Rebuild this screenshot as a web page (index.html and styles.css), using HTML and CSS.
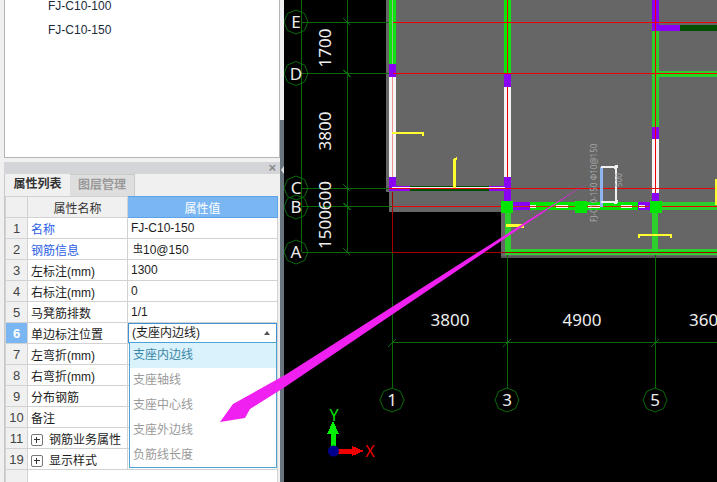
FILE: index.html
```html
<!DOCTYPE html>
<html lang="zh-CN">
<head>
<meta charset="utf-8">
<title>属性列表</title>
<link rel="stylesheet" href="styles.css">
</head>
<body>
<div class="app">
  <aside class="side">
    <div class="tree">
      <div class="tree-item first">FJ-C10-100</div>
      <div class="tree-item">FJ-C10-150</div>
    </div>
    <section class="panel">
      <div class="panel-title"><span class="close">×</span></div>
      <div class="tabs">
        <div class="tab active">属性列表</div>
        <div class="tab">图层管理</div>
      </div>
      <table class="props">
        <colgroup><col class="c-idx"><col class="c-name"><col class="c-val"></colgroup>
        <tr class="head"><th class="idx"></th><th>属性名称</th><th class="val-head">属性值</th></tr>
        <tr><td class="idx">1</td><td class="link">名称</td><td>FJ-C10-150</td></tr>
        <tr><td class="idx">2</td><td class="link">钢筋信息</td><td><span class="rebar">虫</span>10@150</td></tr>
        <tr><td class="idx">3</td><td>左标注(mm)</td><td>1300</td></tr>
        <tr><td class="idx">4</td><td>右标注(mm)</td><td>0</td></tr>
        <tr><td class="idx">5</td><td>马凳筋排数</td><td>1/1</td></tr>
        <tr>
          <td class="idx sel">6</td><td>单边标注位置</td>
          <td class="combo-cell">
            <div class="combo">(支座内边线)<span class="caret"></span></div>
            <ul class="menu">
              <li class="current">支座内边线</li>
              <li>支座轴线</li>
              <li>支座中心线</li>
              <li>支座外边线</li>
              <li>负筋线长度</li>
            </ul>
          </td>
        </tr>
        <tr><td class="idx">7</td><td>左弯折(mm)</td><td></td></tr>
        <tr><td class="idx">8</td><td>右弯折(mm)</td><td></td></tr>
        <tr><td class="idx">9</td><td>分布钢筋</td><td></td></tr>
        <tr><td class="idx">10</td><td>备注</td><td></td></tr>
        <tr><td class="idx">11</td><td><span class="plus"></span>钢筋业务属性</td><td></td></tr>
        <tr><td class="idx">19</td><td><span class="plus"></span>显示样式</td><td></td></tr>
        <tr class="filler"><td class="idx"></td><td colspan="2"></td></tr>
      </table>
    </section>
  </aside>
  <div class="splitter"><div class="grip"><span class="grip-arrow"></span></div></div>
  <main class="canvas">
    <svg class="cad" viewBox="284 0 433 482" width="433" height="482" aria-label="CAD">
      <polygon class="slab" points="386,0 717,0 717,258 501,258 501,212 389,212 389,192 386,192"/>
      <rect class="slab-edge" x="501" y="256" width="216" height="2"/>

      <!-- grid lines -->
      <g class="grid">
        <path d="M301.5 0V252M347 0V252M392 252V388M507 212V388M655 212V388"/>
        <path d="M301.5 22H389M301.5 73.5H389M301.5 188H389M301.5 206.5H392M301.5 252H392M392 342.5H717"/>
        <path d="M343.500 18.500l7 7M343.500 70l7 7M343.500 184.500l7 7M343.500 203l7 7M343.500 248.500l7 7"/>
        <path d="M388 347l8-8M503 347l8-8M651 347l8-8"/>
      </g>

      <!-- left wall -->
      <rect class="g-bright" x="389" y="0" width="7" height="64"/>
      <rect class="slab-line" x="392.300" y="0" width="1" height="64"/>
      <rect class="purple" x="389" y="64" width="7" height="13"/>
      <rect class="white" x="389" y="77" width="7" height="100"/>
      <rect class="pink" x="391.500" y="77" width="1.500" height="100"/>
      <rect class="purple" x="389" y="177" width="7" height="11"/>

      <!-- middle wall -->
      <rect class="g-bright" x="504" y="0" width="6.500" height="73"/>
      <rect class="purple" x="504" y="73" width="6.500" height="14"/>
      <rect class="white" x="504" y="87" width="6.500" height="90"/>
      <rect class="purple" x="504" y="177" width="6.500" height="24"/>

      <!-- right wall -->
      <rect class="purple" x="652" y="0" width="7" height="31"/>
      <rect class="purple" x="659" y="25" width="21" height="6"/>
      <rect class="g-deep" x="680" y="25" width="37" height="6"/>
      <rect class="g-soft" x="652" y="31" width="7" height="96"/>
      <rect class="g-soft" x="659" y="71" width="58" height="6"/>
      <rect class="g-bright" x="659" y="73" width="58" height="1.500"/>
      <rect class="purple" x="652" y="127" width="7" height="12"/>
      <rect class="white" x="652" y="139" width="7" height="54"/>
      <rect class="purple" x="652" y="193" width="7" height="8"/>

      <!-- upper beam C -->
      <rect class="purple" x="389" y="186" width="21" height="5"/>
      <rect class="g-deep" x="410" y="186" width="79" height="5"/>
      <rect class="purple" x="489" y="186" width="16" height="5"/>
      <rect class="white" x="392" y="187" width="113" height="1.500"/>

      <!-- lower walls -->
      <rect class="g-soft" x="505" y="212" width="6" height="43"/>
      <rect class="g-soft" x="652" y="212" width="6" height="38"/>
      <rect class="g-soft" x="507" y="249" width="210" height="6"/>
      <rect class="g-bright" x="507" y="251" width="210" height="2"/>
      <rect class="g-soft" x="661" y="202" width="56" height="8"/>

      <!-- red axis lines -->
      <g class="red">
        <path d="M393 22H717M393 73.500H717M389 188H717M392 206.500H717"/>
        <path d="M507.500 0V73M507.500 87V177M655.500 0V193"/>
      </g>
      <path class="red-dim" d="M392 192V252H717"/>

      <!-- selected beam -->
      <rect class="purple" x="513" y="202" width="17" height="8"/>
      <rect class="g-main" x="530" y="202" width="108" height="8"/>
      <rect class="purple" x="638" y="202" width="12" height="8"/>
      <g class="white">
        <rect x="530" y="205" width="6" height="3"/>
        <rect x="556" y="205" width="12" height="3"/>
        <rect x="588" y="205" width="12" height="3"/>
        <rect x="621" y="205" width="11" height="3"/>
        <rect x="639" y="205" width="6" height="3"/>
      </g>
      <rect class="red-mid" x="513" y="206" width="136" height="1"/>
      <rect class="g-main" x="501" y="201" width="12" height="12"/>
      <rect class="g-main" x="575" y="201" width="12" height="12"/>
      <rect class="g-main" x="650" y="201" width="12" height="12"/>

      <!-- yellow rebars -->
      <g class="yellow">
        <path d="M392 133H423V135.500"/>
        <path d="M454.500 188V160L457 158"/>
        <path d="M506 225.700H522.500V228"/>
        <path d="M639 237.500V235H671V237.500"/>
        <path d="M716.500 179V205"/>
      </g>

      <!-- selected rebar shape -->
      <path class="bar-blue" d="M601 167V207"/>
      <path class="bar-white" d="M601 167H616V202H601"/>
      <circle class="dot" cx="616" cy="167" r="2"/>
      <circle class="dot" cx="616" cy="202" r="2"/>
      <text class="tiny" transform="translate(597 222) rotate(-90)">FJ-C10-150 Φ10@150</text>
      <text class="tiny" transform="translate(622 187) rotate(-90)">500</text>

      <!-- bubbles -->
      <g class="bubble">
        <polygon points="296,10 304.500,13.500 308,22 304.500,30.500 296,34 287.500,30.500 284,22 287.500,13.500"/>
        <polygon points="296,61.500 304.500,65 308,73.500 304.500,82 296,85.500 287.500,82 284,73.500 287.500,65"/>
        <polygon points="296,176 304.500,179.500 308,188 304.500,196.500 296,200 287.500,196.500 284,188 287.500,179.500"/>
        <polygon points="296,195 304.500,198.500 308,207 304.500,215.500 296,219 287.500,215.500 284,207 287.500,198.500"/>
        <polygon points="296,240 304.500,243.500 308,252 304.500,260.500 296,264 287.500,260.500 284,252 287.500,243.500"/>
        <polygon points="392,388 400.500,391.500 404,400 400.500,408.500 392,412 383.500,408.500 380,400 383.500,391.500"/>
        <polygon points="507,388 515.500,391.500 519,400 515.500,408.500 507,412 498.500,408.500 495,400 498.500,391.500"/>
        <polygon points="655,388 663.500,391.500 667,400 663.500,408.500 655,412 646.500,408.500 643,400 646.500,391.500"/>
      </g>
      <g class="label">
        <text x="296" y="28">E</text>
        <text x="296" y="79.500">D</text>
        <text x="296" y="194">C</text>
        <text x="296" y="213">B</text>
        <text x="296" y="258">A</text>
        <text x="392" y="406">1</text>
        <text x="507" y="406">3</text>
        <text x="655" y="406">5</text>
        <text x="450" y="326">3800</text>
        <text x="582" y="326">4900</text>
        <text x="689" y="326" class="start">360</text>
        <text transform="translate(331 48) rotate(-90)">1700</text>
        <text transform="translate(331 131) rotate(-90)">3800</text>
        <text transform="translate(331 215) rotate(-90)">1500600</text>
      </g>

      <!-- axis gizmo -->
      <path class="axis-y" d="M333 451V431"/>
      <polygon class="axis-y-head" points="333,421 339,434 327,434"/>
      <path class="axis-x" d="M333 451H354"/>
      <polygon class="axis-x-head" points="364,451 352,446 352,456"/>
      <circle class="axis-o" cx="333.500" cy="451" r="5.500"/>
      <text class="axis-y-label" x="334" y="421">Y</text>
      <text class="axis-x-label" x="370" y="457">X</text>
    </svg>
  </main>
  <svg class="annot" viewBox="0 0 717 482" width="717" height="482" aria-hidden="true">
    <polygon points="587,183 285,375 233,404 220,422 245,418 250,409 285,387"/>
  </svg>
</div>
</body>
</html>
```

FILE: styles.css
```css
* { box-sizing: border-box; }
html, body { margin: 0; padding: 0; }
body {
  width: 717px;
  height: 482px;
  overflow: hidden;
  background: #f0f0f0;
  font-family: "Liberation Sans", "Noto Sans CJK SC", sans-serif;
  font-size: 12px;
  color: #1c1c1c;
}
.app { position: relative; display: flex; width: 717px; height: 482px; overflow: hidden; }

/* left column */
.side { width: 280px; flex: none; padding-left: 4px; display: flex; flex-direction: column; gap: 4px; }
.tree {
  height: 158px;
  flex: none;
  background: #fff;
  border: 1px solid #b4b4b4;
  border-top: 0;
  padding-left: 43px;
}
.tree-item { height: 24px; line-height: 24px; color: #1a2a3a; }
.tree-item.first { height: 18px; line-height: 12px; }

.panel { flex: 1; min-height: 0; border-left: 1px solid #c8c8c8; background: #f0f0f0; }
.panel-title { height: 12px; background: #d4d5d9; margin-left: -1px; text-align: right; padding-right: 4px; }
.close { font-size: 13px; line-height: 12px; font-weight: bold; color: #8a8a8a; display: block; }
.tabs { display: flex; height: 22px; }
.tab {
  width: 65px;
  line-height: 21px;
  text-align: center;
  color: #999;
  font-weight: bold;
  background: #dedede;
  border-right: 1px solid #c8c8c8;
  border-top: 1px solid #c8c8c8;
}
.tab.active { color: #333; background: #f0f0f0; border-top: 0; border-right: 0; }

.props { width: 272px; table-layout: fixed; border-collapse: collapse; }
.c-idx { width: 22px; }
.c-name { width: 100px; }
.c-val { width: 150px; }
.props th, .props td {
  height: 21px;
  padding: 0 3px;
  border: 1px solid #d2d2d2;
  background: #fff;
  font-weight: normal;
  text-align: left;
  white-space: nowrap;
}
.props th { text-align: center; background: #f0f0f0; color: #333; }
.props th.val-head { background: #7ab6f2; color: #fff; border-color: #5ea3e8; }
.props td.idx, .props th.idx { background: #f0f0f0; text-align: center; color: #444; font-size: 13px; padding: 0; }
.props td.idx.sel { background: #7ab6f2; color: #fff; font-weight: bold; }
.props td.link { color: #2b5ee6; }
.rebar { font-size: 10px; position: relative; top: -2px; margin-left: 2px; }
.plus {
  display: inline-block;
  position: relative;
  width: 12px;
  height: 12px;
  margin-right: 6px;
  border: 1px solid #777;
  border-radius: 2px;
  vertical-align: -2px;
}
.plus::before, .plus::after { content: ""; position: absolute; background: #333; }
.plus::before { left: 2px; right: 2px; top: 4px; height: 1px; }
.plus::after { top: 2px; bottom: 2px; left: 4px; width: 1px; }
.filler td { height: 13px; border-bottom: 0; }
.filler td:not(.idx) { border-right: 1px solid #d2d2d2; }

.combo-cell { position: relative; }
.props td.combo-cell { padding: 0; }
.combo {
  height: 20px;
  line-height: 18px;
  padding-left: 3px;
  border: 1px solid #3f8fd6;
  position: relative;
  margin-top: -1px;
}
.caret {
  position: absolute;
  right: 6px;
  top: 7px;
  border-left: 3px solid transparent;
  border-right: 3px solid transparent;
  border-bottom: 4px solid #555;
}
.menu {
  position: absolute;
  left: 1px;
  top: 19px;
  width: 148px;
  height: 126px;
  margin: 0;
  padding: 0;
  list-style: none;
  background: #fff;
  border: 1px solid #4ea3d6;
  z-index: 2;
}
.menu li { height: 25px; line-height: 24px; padding-left: 3px; color: #9a9a9a; }
.menu li.current { background: #d9f2fb; color: #3b86a8; }

/* splitter */
.splitter { width: 4px; flex: none; display: flex; flex-direction: column; justify-content: flex-end; }
.grip { height: 362px; background: #68747e; position: relative; }
.grip-arrow {
  position: absolute;
  left: 1px;
  top: 46px;
  border-top: 4px solid transparent;
  border-bottom: 4px solid transparent;
  border-right: 3px solid #dfe2e5;
}

/* CAD canvas */
.canvas { flex: 1; min-width: 0; background: #000; }
.cad { display: block; shape-rendering: crispEdges; font-family: "Noto Sans", sans-serif; }
.slab { fill: #666; }
.slab-edge { fill: #555; }
.grid { fill: none; stroke: #0a6a0a; stroke-width: 1; }
.g-bright { fill: #0ee30e; }
.g-main { fill: #00e600; }
.g-soft { fill: #2ccf2c; }
.g-deep { fill: #004f00; }
.purple { fill: #8a00f5; }
.white { fill: #f4f4f4; }
.pink { fill: #f09090; }
.slab-line { fill: #8fbf8f; }
.red { fill: none; stroke: #f00000; stroke-width: 1; }
.red-dim { fill: none; stroke: #a40000; stroke-width: 1; }
.red-mid { fill: #c83000; }
.yellow { fill: none; stroke: #ffff30; stroke-width: 2.5; }
.bar-blue { fill: none; stroke: #8fb4f0; stroke-width: 3; }
.bar-white { fill: none; stroke: #f0f0f0; stroke-width: 1.500; }
.dot { fill: #f0f0f0; }
.tiny { font-size: 8px; fill: #a8a8a8; }
.bubble polygon { fill: none; stroke: #0a6a0a; stroke-width: 1; shape-rendering: geometricPrecision; }
.label text { font-size: 17px; fill: #eee; text-anchor: middle; }
.label text.start { text-anchor: start; }
.axis-y { stroke: #00f000; stroke-width: 5; }
.axis-y-head { fill: #00f000; }
.axis-x { stroke: #f00000; stroke-width: 5; }
.axis-x-head { fill: #f00000; }
.axis-o { fill: #00008c; shape-rendering: geometricPrecision; }
.axis-y-label { font-size: 16px; fill: #00e000; text-anchor: middle; }
.axis-x-label { font-size: 16px; fill: #f00000; text-anchor: middle; }

/* annotation arrow over everything */
.annot { position: absolute; left: 0; top: 0; pointer-events: none; z-index: 5; }
.annot polygon { fill: #f020f0; }
```
